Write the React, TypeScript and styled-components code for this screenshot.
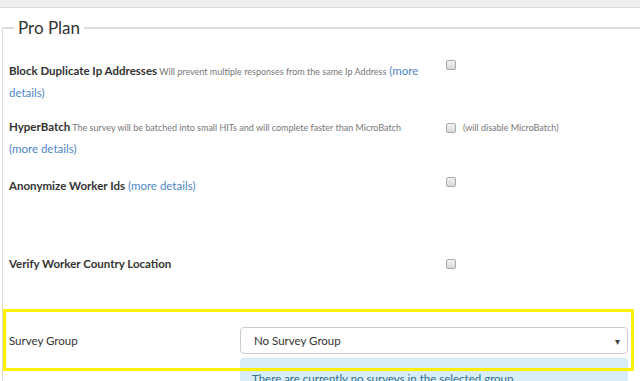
import React from 'react'
import styled, { createGlobalStyle } from 'styled-components'

const GlobalStyle = createGlobalStyle`
  html, body {
    margin: 0;
    padding: 0;
    background: #fff;
    overflow: hidden;
  }
  body {
    font-family: Lato, "Open Sans", "Liberation Sans", sans-serif;
    color: #333;
  }
`

type Option = {
  title: string
  description?: string
  more?: boolean
  note?: string
  height: number
  boxOffset: number
}

const options: Option[] = [
  {
    title: 'Block Duplicate Ip Addresses',
    description: 'Will prevent multiple responses from the same Ip Address',
    more: true,
    height: 56,
    boxOffset: 0,
  },
  {
    title: 'HyperBatch',
    description: 'The survey will be batched into small HITs and will complete faster than MicroBatch',
    more: true,
    note: '(will disable MicroBatch)',
    height: 59,
    boxOffset: 6,
  },
  {
    title: 'Anonymize Worker Ids',
    more: true,
    height: 78,
    boxOffset: 2,
  },
  {
    title: 'Verify Worker Country Location',
    height: 56,
    boxOffset: 6,
  },
]

export default function App() {
  return (
    <>
      <GlobalStyle />
      <TopStrip />
      <PlanFieldset>
        <Legend>Pro Plan</Legend>
        <Options>
          {options.map(opt => (
            <OptionRow key={opt.title} $height={opt.height}>
              <OptionLabel>
                <Title>{opt.title}</Title>
                {opt.description && <Description> {opt.description}</Description>}
                {opt.more && (
                  <>
                    {' '}
                    <Paren>(</Paren>
                    <MoreLink href="#">more details</MoreLink>
                    <Paren>)</Paren>
                  </>
                )}
              </OptionLabel>
              <CheckCell $offset={opt.boxOffset}>
                <Checkbox type="checkbox" />
                {opt.note && <Note>{opt.note}</Note>}
              </CheckCell>
            </OptionRow>
          ))}
        </Options>

        <SurveySection>
          <SurveyLabel>Survey Group</SurveyLabel>
          <SurveyControl>
            <Select>
              <span>No Survey Group</span>
              <Caret>▾</Caret>
            </Select>
            <InfoAlert>There are currently no surveys in the selected group.</InfoAlert>
          </SurveyControl>
        </SurveySection>
      </PlanFieldset>
    </>
  )
}

const TopStrip = styled.div`
  height: 7px;
  background: #eeeeee;
  border-bottom: 1px solid #dcdcdc;
`

const PlanFieldset = styled.fieldset`
  margin: 9px -40px 0 2px;
  padding: 0 0 0 6px;
  border: 1px solid #dddddd;
  border-top: 2px solid #dddddd;
  min-width: 0;
`

const Legend = styled.legend`
  margin-left: 5px;
  padding: 0 4px;
  font-size: 17px;
  font-weight: 400;
  line-height: 22px;
  color: #333;
`

const Options = styled.div`
  padding-top: 21px;
`

const OptionRow = styled.div<{ $height: number }>`
  display: flex;
  align-items: flex-start;
  height: ${p => p.$height}px;
`

const OptionLabel = styled.div`
  width: 416px;
  padding-right: 21px;
  font-size: 11.5px;
  line-height: 21px;
  color: #333;
`

const Title = styled.span`
  font-weight: 700;
`

const Description = styled.span`
  font-size: 9px;
  color: #777;
`

const Paren = styled.span`
  color: #4f86c6;
`

const MoreLink = styled.a`
  color: #4f86c6;
  text-decoration: none;
`

const CheckCell = styled.div<{ $offset: number }>`
  display: flex;
  align-items: center;
  gap: 7px;
  margin-top: ${p => p.$offset}px;
`

const Checkbox = styled.input`
  appearance: none;
  margin: 0;
  width: 10px;
  height: 10px;
  border: 1px solid #a9a9a9;
  border-radius: 2px;
  background: linear-gradient(#f2f2f2, #dadada);
`

const Note = styled.span`
  font-size: 9px;
  color: #777;
`

// the yellow frame is an annotation drawn over the group, so it overlaps the alert below
const SurveySection = styled.div`
  position: relative;
  display: flex;
  align-items: flex-start;
  padding-top: 18px;
  padding-bottom: 20px;

  &::after {
    content: '';
    position: absolute;
    left: -6px;
    top: 0;
    width: 631px;
    height: 62px;
    border: 3px solid #fff200;
    box-sizing: border-box;
    pointer-events: none;
    z-index: 2;
  }
`

const SurveyLabel = styled.div`
  width: 231px;
  font-size: 11.5px;
  line-height: 27px;
  color: #333;
`

const SurveyControl = styled.div`
  width: 388px;
  display: flex;
  flex-direction: column;
  gap: 4px;
`

const Select = styled.div`
  display: flex;
  align-items: center;
  justify-content: space-between;
  height: 27px;
  padding: 0 7px 0 13px;
  border: 1px solid #cccccc;
  border-radius: 4px;
  box-sizing: border-box;
  font-size: 11.5px;
  color: #333;
`

const Caret = styled.span`
  font-size: 10px;
  color: #444;
`

const InfoAlert = styled.div`
  padding: 14px 12px;
  background: #d9edf7;
  border-radius: 4px;
  font-size: 11.5px;
  line-height: 14px;
  color: #31708f;
`
